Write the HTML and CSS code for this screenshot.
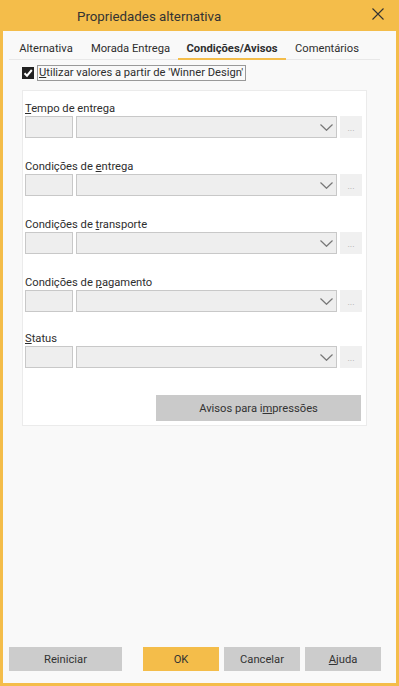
FILE: index.html
```html
<!DOCTYPE html>
<html lang="pt">
<head>
<meta charset="utf-8">
<title>Propriedades alternativa</title>
<link rel="stylesheet" href="styles.css">
</head>
<body>
<div class="window">
  <div class="titlebar">
    <span class="title">Propriedades alternativa</span>
    <svg class="close" width="12" height="12" viewBox="0 0 12 12"><path d="M0.5 0.5 L11.5 11.5 M11.5 0.5 L0.5 11.5" stroke="#333" stroke-width="1.1" fill="none"/></svg>
  </div>
  <div class="tabs">
    <div class="tab t1">Alternativa</div>
    <div class="tab t2">Morada Entrega</div>
    <div class="tab t3 active">Condições/Avisos</div>
    <div class="tab t4">Comentários</div>
  </div>
  <div class="checkrow">
    <span class="checkbox"><svg width="12" height="12" viewBox="0 0 12 12"><path d="M2.5 6.2 L5 8.7 L9.8 3" stroke="#fff" stroke-width="2" fill="none"/></svg></span>
    <span class="checklabel"><u>U</u>tilizar valores a partir de 'Winner Design'</span>
  </div>
  <div class="panel">
    <div class="group">
      <div class="label"><u>T</u>empo de entrega</div>
      <div class="fields">
        <span class="code"></span>
        <span class="combo"><svg width="13" height="7" viewBox="0 0 13 7"><path d="M0.5 0.5 L6.5 6.3 L12.5 0.5" stroke="#777" stroke-width="1.2" fill="none"/></svg></span>
        <span class="dots">...</span>
      </div>
    </div>
    <div class="group">
      <div class="label">Condições de <u>e</u>ntrega</div>
      <div class="fields">
        <span class="code"></span>
        <span class="combo"><svg width="13" height="7" viewBox="0 0 13 7"><path d="M0.5 0.5 L6.5 6.3 L12.5 0.5" stroke="#777" stroke-width="1.2" fill="none"/></svg></span>
        <span class="dots">...</span>
      </div>
    </div>
    <div class="group">
      <div class="label">Condições de <u>t</u>ransporte</div>
      <div class="fields">
        <span class="code"></span>
        <span class="combo"><svg width="13" height="7" viewBox="0 0 13 7"><path d="M0.5 0.5 L6.5 6.3 L12.5 0.5" stroke="#777" stroke-width="1.2" fill="none"/></svg></span>
        <span class="dots">...</span>
      </div>
    </div>
    <div class="group short">
      <div class="label">Condições de <u>p</u>agamento</div>
      <div class="fields">
        <span class="code"></span>
        <span class="combo"><svg width="13" height="7" viewBox="0 0 13 7"><path d="M0.5 0.5 L6.5 6.3 L12.5 0.5" stroke="#777" stroke-width="1.2" fill="none"/></svg></span>
        <span class="dots">...</span>
      </div>
    </div>
    <div class="group last">
      <div class="label"><u>S</u>tatus</div>
      <div class="fields">
        <span class="code"></span>
        <span class="combo"><svg width="13" height="7" viewBox="0 0 13 7"><path d="M0.5 0.5 L6.5 6.3 L12.5 0.5" stroke="#777" stroke-width="1.2" fill="none"/></svg></span>
        <span class="dots">...</span>
      </div>
    </div>
    <div class="avisos-row">
      <button class="btn avisos">Avisos para i<u>m</u>pressões</button>
    </div>
  </div>
  <div class="footer">
    <button class="btn reiniciar">Reiniciar</button>
    <button class="btn ok">OK</button>
    <button class="btn cancel">Cancelar</button>
    <button class="btn help"><u>A</u>juda</button>
  </div>
</div>
</body>
</html>
```

FILE: styles.css
```css
* { box-sizing: border-box; }
html, body { margin: 0; padding: 0; }
body {
  font-family: Roboto, "Noto Sans", "Liberation Sans", sans-serif;
  font-size: 11.2px;
  color: #2e2e2e;
  background: #f9f9f9;
}
.window {
  width: 399px;
  height: 686px;
  border: 3px solid #f4bd4a;
  border-top: 0;
  background: #f9f9f9;
  display: flex;
  flex-direction: column;
}
.titlebar {
  height: 31px;
  margin: 0 -3px;
  background: #f4bd4a;
  display: flex;
  align-items: center;
  position: relative;
}
.title {
  margin-left: 77px;
  font-size: 13.3px;
  color: #333;
  padding-top: 1px;
}
.close {
  position: absolute;
  left: 372px;
  top: 8px;
}
.tabs {
  display: flex;
  margin-left: 6px;
  width: 371px;
  height: 29px;
  border-bottom: 1px solid #e8e8e8;
  padding-top: 6px;
}
.tab {
  height: 23px;
  display: flex;
  align-items: center;
  justify-content: center;
}
.t1 { width: 74px; }
.t2 { width: 95px; }
.t3 { width: 108px; }
.t4 { width: 82px; }
.tab.active {
  font-weight: bold;
  box-shadow: inset 0 -2px 0 #f4bd4a;
}
.checkrow {
  display: flex;
  align-items: center;
  margin: 5px 0 0 19px;
  height: 16px;
}
.checkbox {
  width: 12px;
  height: 12px;
  background: #222;
  display: block;
}
.checkbox svg { display: block; }
.checklabel {
  margin-left: 3px;
  height: 16px;
  width: 209px;
  border: 1px solid #999;
  line-height: 14px;
  padding-left: 1px;
  white-space: nowrap;
}
u { text-decoration: underline; text-underline-offset: 1px; }
.panel {
  margin: 9px 0 0 19px;
  width: 345px;
  height: 336px;
  background: #fff;
  border: 1px solid #ebebeb;
  padding: 10px 0 0 2px;
}
.group { margin-bottom: 21px; }
.group.short { margin-bottom: 19px; }
.group.last { margin-bottom: 0; }
.label {
  height: 15px;
  line-height: 15px;
  white-space: nowrap;
}
.fields {
  display: flex;
  height: 22px;
}
.code {
  width: 48px;
  height: 22px;
  background: #eeeeee;
  border: 1px solid #c8c8c8;
}
.combo {
  width: 261px;
  height: 22px;
  margin-left: 3px;
  background: #eeeeee;
  border: 1px solid #c8c8c8;
  display: flex;
  align-items: center;
  justify-content: flex-end;
  padding-right: 3px;
}
.combo svg { display: block; }
.dots {
  width: 22px;
  height: 22px;
  margin-left: 3px;
  background: #f0f0f0;
  color: #aaa;
  font-size: 9px;
  text-align: center;
  line-height: 24px;
}
.avisos-row {
  display: flex;
  justify-content: flex-end;
  margin-top: 27px;
  padding-right: 5px;
}
.btn {
  font-family: inherit;
  font-size: 11.2px;
  color: #333;
  border: 0;
  padding: 0;
  background: #cccccc;
  height: 24px;
  display: block;
}
.avisos {
  width: 205px;
  height: 26px;
  background: #cacaca;
}
.footer {
  margin-top: auto;
  display: flex;
  margin-bottom: 12px;
  padding-left: 6px;
}
.reiniciar { width: 113px; }
.ok { width: 76px; margin-left: 21px; background: #f4bd4a; }
.cancel { width: 76px; margin-left: 5px; }
.help { width: 76px; margin-left: 5px; }
```
